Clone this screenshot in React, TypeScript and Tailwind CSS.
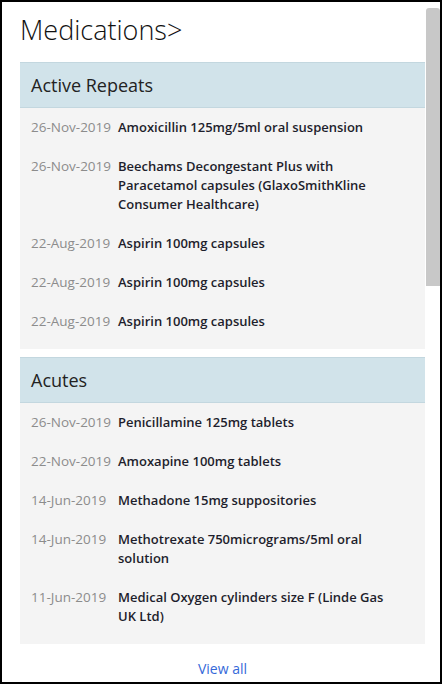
const activeRepeats = [
  { date: "26-Nov-2019", name: "Amoxicillin 125mg/5ml oral suspension" },
  {
    date: "26-Nov-2019",
    name: "Beechams Decongestant Plus with Paracetamol capsules (GlaxoSmithKline Consumer Healthcare)",
  },
  { date: "22-Aug-2019", name: "Aspirin 100mg capsules" },
  { date: "22-Aug-2019", name: "Aspirin 100mg capsules" },
  { date: "22-Aug-2019", name: "Aspirin 100mg capsules" },
];

const acutes = [
  { date: "26-Nov-2019", name: "Penicillamine 125mg tablets" },
  { date: "22-Nov-2019", name: "Amoxapine 100mg tablets" },
  { date: "14-Jun-2019", name: "Methadone 15mg suppositories" },
  { date: "14-Jun-2019", name: "Methotrexate 750micrograms/5ml oral solution" },
  { date: "11-Jun-2019", name: "Medical Oxygen cylinders size F (Linde Gas UK Ltd)" },
];

type Med = { date: string; name: string };

const Section = ({ title, items }: { title: string; items: Med[] }) => {
  return (
    <div>
      <div className="h-[46px] flex items-center pl-[11px] bg-[#d1e3ea] border-t border-b border-[#c3d7df] text-[18px] text-[#222]">
        {title}
      </div>
      <div className="bg-[#f4f4f4] pb-[8px]">
        {items.map((m, i) => (
          <div key={i} className="flex py-[10px] pl-[11px] pr-[30px] leading-[19px]">
            <div className="w-[87px] shrink-0 text-[13.5px] text-[#8c8c8c]">{m.date}</div>
            <div className="flex-1 text-[13px] font-semibold text-[#1e1e2c]">{m.name}</div>
          </div>
        ))}
      </div>
    </div>
  );
};

export default function App() {
  return (
    <div
      className="w-[442px] h-[684px] border-2 border-black bg-white flex overflow-hidden"
      style={{ fontFamily: '"Open Sans", "Noto Sans", sans-serif' }}
    >
      <div className="flex-1 min-w-0 pl-[18px] pr-[1px] overflow-hidden">
        <div className="h-[60px] pt-[10px]">
          <h1 className="text-[27px] leading-[36px] font-light text-[#111]">Medications&gt;</h1>
        </div>
        <div className="flex flex-col gap-[8px]">
          <Section title="Active Repeats" items={activeRepeats} />
          <Section title="Acutes" items={acutes} />
        </div>
        <div className="mt-[15px] text-center text-[14px] leading-[20px] text-[#3569d9]">
          <a href="#">View all</a>
        </div>
      </div>
      <div className="w-[14px] shrink-0">
        <div className="mt-[6px] h-[278px] bg-[#c8c8c8] rounded-t-[3px]" />
      </div>
    </div>
  );
}
